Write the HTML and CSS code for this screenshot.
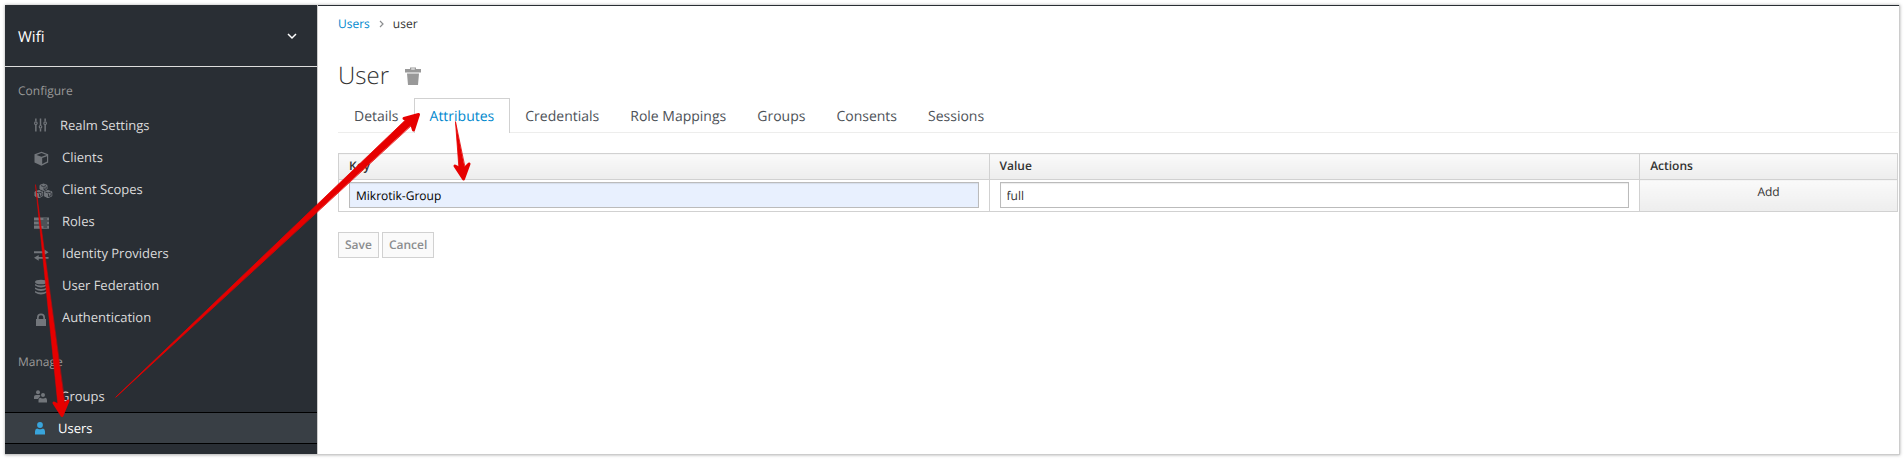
FILE: index.html
```html
<!DOCTYPE html>
<html lang="en">
<head>
<meta charset="utf-8">
<title>User attributes</title>
<link rel="stylesheet" href="styles.css">
</head>
<body>
<div class="frame">
  <nav class="sidebar">
    <button class="realm" type="button">Wifi
      <svg class="chevron" width="10" height="7" viewBox="0 0 10 7"><path d="M1 1l4 4 4-4" fill="none" stroke="#fff" stroke-width="1.5"/></svg>
    </button>
    <h2 class="group-title">Configure</h2>
    <ul class="menu">
      <li><a href="#" class="near"><svg class="icon" width="13" height="14" viewBox="0 0 14 14"><g fill="none" stroke="#72767b" stroke-width="1.6"><path d="M2 0v3M2 7v7M7 0v7M7 11v3M12 0v3M12 7v7"/><circle cx="2" cy="5" r="1.4" stroke-width="1.2"/><circle cx="7" cy="9" r="1.4" stroke-width="1.2"/><circle cx="12" cy="5" r="1.4" stroke-width="1.2"/></g></svg>Realm Settings</a></li>
      <li><a href="#"><svg class="icon low" width="16" height="16" viewBox="0 0 16 16"><path fill="#72767b" fill-rule="evenodd" d="M7.500.8L14.200 3.300V11.500L7.500 14.800.5 11.500V3.300zM7.500 2L2.500 3.900 7.500 5.800l5-1.900zM8.200 7v6l4.800-2.400V5.200z"/></svg>Clients</a></li>
      <li><a href="#"><svg class="icon low" width="19" height="16" viewBox="0 0 19 16"><g fill="#72767b" stroke="#72767b" stroke-linejoin="round"><path d="M9.500 1L13 2.300V6L9.500 7.500 6 6V2.300z"/><path d="M5 7.500l3.500 1.300V13L5 14.700 1 13V8.800z"/><path d="M14 7.500l3.800 1.300V13L14 14.700 10.300 13V8.800z"/></g><path fill="none" stroke="#292e34" stroke-width=".9" d="M7 2.600l2.500 1 2.500-1M10 4.500v2.200l2.200-1V3.700M2 9l3 1 2.800-1M5.500 11v2.600l2.400-1V10M11.300 9l2.700 1 3-1M14.500 11v2.600l2.600-1V10"/></svg>Client Scopes</a></li>
      <li><a href="#"><svg class="icon low" width="15" height="14" viewBox="0 0 16 14"><path fill="#72767b" fill-rule="evenodd" d="M0 1h16v3.300H0zM0 5.300h16v3.400H0zM0 9.700h16V13H0zM10 2.200h4v1h-4zM5 6.500h9v1H5zM10 10.800h4v1h-4z"/></svg>Roles</a></li>
      <li><a href="#"><svg class="icon low" width="15" height="14" viewBox="0 0 16 14"><path fill="#72767b" d="M0 3h11V1l4.500 3L11 7V5H0zM15.500 9H5V7L0 10l5 3v-2h10.500z"/></svg>Identity Providers</a></li>
      <li><a href="#"><svg class="icon low" width="14" height="16" viewBox="0 0 14 16"><g fill="#72767b"><ellipse cx="7" cy="3" rx="6" ry="2.300"/><path d="M1 5q6 3 12 0v1.500q-6 4-12 0zM1 8.500q6 3 12 0V10q-6 4-12 0zM1 12q6 3 12 0v1.500q-6 4-12 0z"/></g></svg>User Federation</a></li>
      <li><a href="#"><svg class="icon low lock" width="10" height="13" viewBox="0 0 10 13"><path fill="#72767b" d="M0 6h1V4.500a4 4 0 0 1 8 0V6h1v7H0z"/><path fill="#292e34" d="M2.700 6V4.500a2.300 2.300 0 0 1 4.600 0V6z"/></svg>Authentication</a></li>
    </ul>
    <h2 class="group-title manage">Manage</h2>
    <ul class="menu">
      <li><a href="#" class="near"><svg class="icon" width="13" height="13" viewBox="0 0 13 13"><g fill="#72767b"><circle cx="4" cy="2.200" r="2"/><path d="M0 9V6.500Q0 5 2 5h3.500q1 0 .8 1L4 9z"/><circle cx="9" cy="5" r="2"/><path d="M4.500 12.500V10q0-2 1.700-2.200L8 8.500h2l1.400-.7Q13 8 13 10v2.500z"/></g></svg>Groups</a></li>
      <li class="active"><a href="#"><svg class="icon" width="12" height="13" viewBox="0 0 12 13"><g fill="#39a5dc"><circle cx="6" cy="3" r="2.900"/><path d="M1 12.500V9.500Q1 7 3 6.500L5 7.300h2l2-.8q2 .5 2 3v3z"/></g></svg>Users</a></li>
    </ul>
  </nav>
  <main class="content">
    <nav class="breadcrumb"><a href="#">Users</a><svg width="5" height="8" viewBox="0 0 5 8"><path d="M1 1l3 3-3 3" fill="none" stroke="#8b8d8f" stroke-width="1.200"/></svg><span>user</span></nav>
    <header class="title">
      <h1>User</h1>
      <button type="button" aria-label="Delete user"><svg width="16" height="18" viewBox="0 0 16 18"><path fill="#999" fill-rule="evenodd" d="M0 2h5V.5h6V2h5v3.500H0zM6.200 1.500V2.500h3.600v-1zM2 6.500h12L13 18H3z"/></svg></button>
    </header>
    <ul class="tabs">
      <li><a href="#">Details</a></li>
      <li class="current"><a href="#">Attributes</a></li>
      <li><a href="#">Credentials</a></li>
      <li><a href="#">Role Mappings</a></li>
      <li><a href="#">Groups</a></li>
      <li><a href="#">Consents</a></li>
      <li><a href="#">Sessions</a></li>
    </ul>
    <form>
      <table class="attributes">
        <colgroup><col class="wide"><col class="wide"><col></colgroup>
        <thead><tr><th id="key">Key</th><th id="value">Value</th><th>Actions</th></tr></thead>
        <tbody><tr>
          <td><input class="filled" type="text" value="Mikrotik-Group" aria-labelledby="key"></td>
          <td><input type="text" value="full" aria-labelledby="value"></td>
          <td class="action"><button type="button">Add</button></td>
        </tr></tbody>
      </table>
      <div class="buttons"><button type="submit">Save</button><button type="button">Cancel</button></div>
    </form>
  </main>
</div>
<svg class="arrows" width="480" height="430" viewBox="0 0 480 430">
  <g fill="#e60000" stroke="#e60000" stroke-linejoin="round" stroke-linecap="round">
    <path d="M35.500 185L58 406 65 406z" stroke-width=".5"/>
    <path d="M54 403L62 415.500 68 401 62 407z" stroke-width="3"/>
    <path d="M116 397L407 118.500 412 124.500z" stroke-width=".8"/>
    <path d="M404 118.500L418.500 114.500 413.500 130 411 122z" stroke-width="3"/>
    <path d="M455.500 122L459 169 465 169z" stroke-width=".8"/>
    <path d="M455 166L463.500 179 469 164 463 170z" stroke-width="3"/>
  </g>
</svg>
</body>
</html>
```
FILE: styles.css
```css
* { box-sizing: border-box; }
body { margin: 0; padding: 5px 4px 4px 5px; font: 12px/20px "Open Sans", sans-serif; text-rendering: geometricPrecision; color: #333; background: #fff; }
a { color: inherit; text-decoration: none; }
ul { list-style: none; margin: 0; padding: 0; }
button, input { font: inherit; color: inherit; border-radius: 0; text-rendering: inherit; }
.frame { display: flex; min-height: calc(100vh - 9px); border-right: 1px solid #ccc; border-bottom: 1px solid #ccc; box-shadow: 0 0 3px #aaa; }
.sidebar { flex: 0 0 313px; background: #292e34; border-right: 1px solid #ccc; color: #dbdbdb; font-size: 13px; }
.realm { display: flex; align-items: center; justify-content: space-between; width: 100%; height: 62px; padding: 2px 20px 0 13px; background: none; border: 0; border-bottom: 1px solid #ddd; color: #fff; font-size: 15px; }
.group-title { margin: 14px 0 8px 13px; font-size: 12px; font-weight: 400; line-height: 20px; color: #999; }
.group-title.manage { margin: 19px 0 8px 13px; }
.menu a { display: grid; grid-template-columns: 15px 1fr; align-items: center; column-gap: 13px; height: 32px; padding-left: 29px; }
.menu .near { column-gap: 11px; }
.menu .icon { overflow: visible; }
.menu .low { margin-top: 4px; }
.menu .lock { margin-left: 2px; }
.menu .active { background: #393f45; border: solid #000; border-width: 1px 0; color: #fff; }
.menu .active a { height: 30px; column-gap: 9px; }
.content { flex: 1; min-width: 0; padding: 8px 1px 0 20px; border-top: 1px solid #292e34; }
.breadcrumb { display: flex; align-items: center; gap: 9px; }
.breadcrumb a, .current a { color: #0088ce; }
.title { display: flex; align-items: center; gap: 16px; margin-top: 28px; }
h1 { margin: 0; font-size: 24px; line-height: 28px; font-weight: 300; }
.title button { display: flex; padding: 0; border: 0; background: none; }
.tabs { display: flex; margin-top: 8px; border-bottom: 1px solid #ededec; font-size: 14px; color: #4d5258; }
.tabs li + li { margin-left: -1px; }
.tabs a { display: block; padding: 8px 15px 5px; border: 1px solid transparent; border-bottom: 0; }
.tabs .current a { background: #fff; border-color: #d1d1d1; margin-bottom: -1px; padding-bottom: 6px; color: #0088ce; }
.attributes { width: 100%; margin-top: 20px; border-collapse: collapse; table-layout: fixed; }
.attributes .wide { width: 41.73%; }
th, td { border: 1px solid #d1d1d1; text-align: left; }
th { height: 26px; padding: 0 10px 2px; line-height: 18px; font-weight: 600; background: linear-gradient(#fafafa, #ededed); }
td { height: 32px; padding: 2px 10px 3px; }
td input { display: block; width: 100%; height: 26px; padding: 0 6px; border: 1px solid #bbb; background: #fff; box-shadow: inset 0 1px 1px rgba(0,0,0,.08); }
td .filled { background: #e8f0fe; color: #000; }
.attributes .action { padding: 0; background: linear-gradient(#fafafa, #ededed); }
.action button { display: block; width: 100%; height: 24px; margin-bottom: 7px; padding: 0; border: 0; background: none; }
.buttons { display: flex; gap: 3px; margin-top: 20px; }
.buttons button { height: 26px; padding: 0 6px; border: 1px solid #d1d1d1; background: #fafafa; color: #8b8d8f; font-weight: 600; }
.arrows { position: absolute; left: 0; top: 0; pointer-events: none; }
```
